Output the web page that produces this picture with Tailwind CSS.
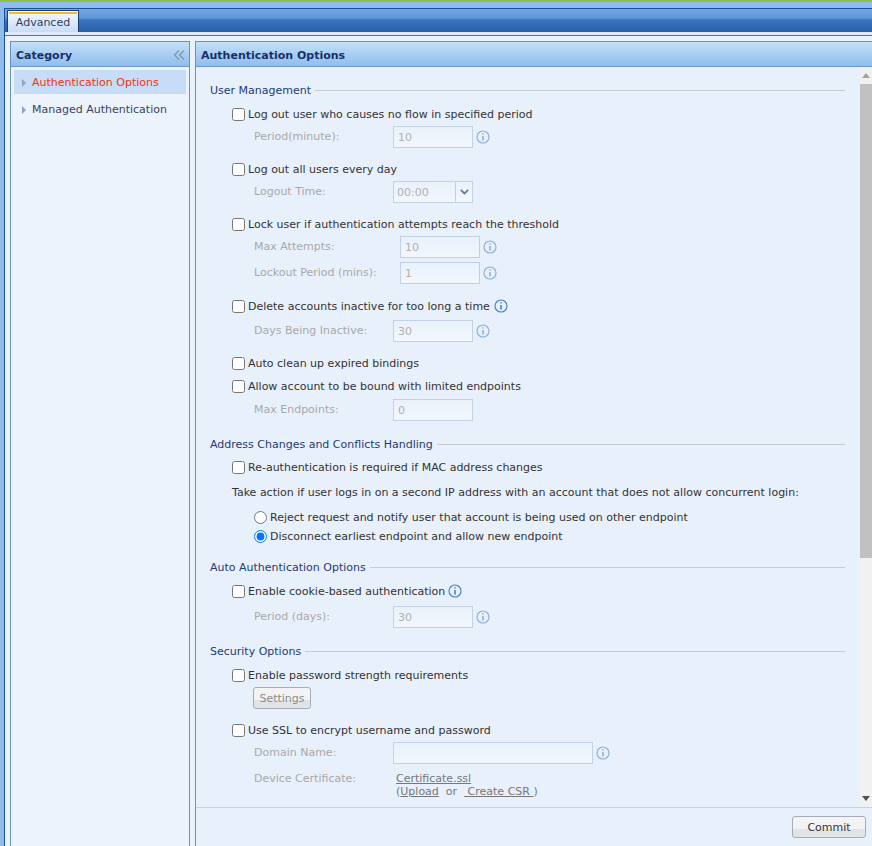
<!DOCTYPE html>
<html lang="en">
<head>
    <meta charset="UTF-8">
    <title>Advanced</title>
    <script src="https://cdn.jsdelivr.net/npm/@tailwindcss/browser@4"></script>
</head>
<body class="m-0 bg-[#8fbcec]">
<div class="w-[872px] h-[846px] overflow-hidden flex flex-col font-['DejaVu_Sans',sans-serif] text-[11px] text-[#333]">
    <div class="h-[2px] bg-[#8cc152]"></div>
    <div class="h-[6px]"></div>

    <div class="ml-[4px] flex-1 min-h-0 flex flex-col border-l border-[#1f4f93] bg-[#eaf2fc]">
        <!-- tab bar -->
        <div class="h-[24px] shrink-0 pt-px pl-[2px] border-t border-[#1f4f93] bg-[linear-gradient(#74a7e2,#5f95d6_40%,#3a72bc_48%,#2a60aa)]">
            <div class="w-[72px] h-[23px] border border-b-0 border-[#1b3f78] bg-gradient-to-b from-[#f6f9fd] to-[#c5dbf5] pt-px px-px">
                <div class="h-[20px] pt-px flex items-center justify-center border-t-2 border-[#fbb62a] text-[#2c3e66]">Advanced</div>
            </div>
        </div>
        <div class="h-[4px] shrink-0 bg-[#dfeafa] border-b border-[#4f75a5]"></div>

        <div class="flex-1 flex min-h-0 pt-[5px] pl-[5px] gap-[5px]">
            <!-- category -->
            <div class="w-[180px] flex flex-col border-x border-t border-[#6f90bb] bg-[#ecf3fd]">
                <div class="h-[25px] shrink-0 flex items-center justify-between pt-[4px] pl-[5px] pr-[4px] bg-gradient-to-b from-[#c5e0f9] to-[#8fbdec] border-b border-[#6f9ac9]">
                    <span class="font-bold text-[#15316b]">Category</span>
                    <svg class="w-[12px] h-[10px] mb-[2px]" viewBox="0 0 12 10" fill="none" stroke="#7d93ad" stroke-width="1.2"><path d="M6 .5 1.5 5 6 9.5M11 .5 6.5 5 11 9.5"/></svg>
                </div>
                <div class="pt-[3px] px-[3px]">
                    <div class="h-[24px] pt-[2px] flex items-center bg-[#c6dcf7] pl-[8px] text-[#f5340f]">
                        <svg class="w-[4px] h-[8px] mr-[6px]" viewBox="0 0 4 8"><path d="M0 0 4 4 0 8z" fill="#8ea3bd"/></svg>Authentication Options
                    </div>
                    <div class="h-[24px] mt-[3px] pt-[2px] flex items-center pl-[8px] text-[#39435c]">
                        <svg class="w-[4px] h-[8px] mr-[6px]" viewBox="0 0 4 8"><path d="M0 0 4 4 0 8z" fill="#8ea3bd"/></svg>Managed Authentication
                    </div>
                </div>
            </div>

            <!-- options -->
            <div class="flex-1 min-w-0 flex flex-col border-l border-t border-[#6f90bb] bg-[#e8f0fc]">
                <div class="h-[25px] shrink-0 pt-[4px] flex items-center pl-[5px] bg-gradient-to-b from-[#c5e0f9] to-[#8fbdec] border-b border-[#6f9ac9] font-bold text-[#15316b]">Authentication Options</div>

                <div class="flex-1 min-h-0 flex border-b border-[#c9d3e0]">
                    <div class="flex-1 min-w-0 pt-[15px] pl-[14px] pr-[15px]">
                        <div class="h-[16px] pt-[2px] flex items-center gap-[4px] text-[#1f3b73]">User Management<span class="flex-1 h-px mb-[2px] bg-[#c8ccd2]"></span></div>

                        <label class="h-[20px] mt-[6px] pt-[2px] ml-[22px] flex items-center gap-[3px]"><input type="checkbox" class="w-[13px] h-[13px] m-0 mb-[2px]">Log out user who causes no flow in specified period</label>
                        <div class="h-[22px] mt-[2px] ml-[44px] flex items-center text-[#a8a8a8]">
                            <span class="w-[139px]">Period(minute):</span>
                            <span class="w-[80px] h-[22px] pt-[2px] flex items-center pl-[4px] border border-[#c3d1e4] bg-gradient-to-b from-[#e9f1fb] to-[#f3f7fd] text-[#b0b0b0]">10</span>
                            <svg class="w-[14px] h-[14px] ml-[3px]" viewBox="0 0 14 14" fill="none" stroke="#8fb0d6" stroke-width="1.2"><circle cx="7" cy="7" r="6"/><path d="M7 6v4.5M7 3.2v1.3" stroke-width="1.6"/></svg>
                        </div>

                        <label class="h-[20px] mt-[11px] pt-[2px] ml-[22px] flex items-center gap-[3px]"><input type="checkbox" class="w-[13px] h-[13px] m-0 mb-[2px]">Log out all users every day</label>
                        <div class="h-[22px] mt-[2px] ml-[44px] flex items-center text-[#a8a8a8]">
                            <span class="w-[139px]">Logout Time:</span>
                            <span class="w-[80px] h-[22px] flex items-center pl-[3px] border border-[#c3d1e4] bg-gradient-to-b from-[#e9f1fb] to-[#f3f7fd] text-[#b0b0b0]"><span class="pt-[2px]">00:00</span>
                                <span class="ml-auto w-[17px] h-full flex items-center justify-center border-l border-[#c3d1e4]"><svg class="w-[9px] h-[6px]" viewBox="0 0 9 6" fill="none" stroke="#5f7fa8" stroke-width="1.8"><path d="M.8 .8 4.5 4.5 8.2 .8"/></svg></span>
                            </span>
                        </div>

                        <label class="h-[20px] mt-[11px] pt-[2px] ml-[22px] flex items-center gap-[3px]"><input type="checkbox" class="w-[13px] h-[13px] m-0 mb-[2px]">Lock user if authentication attempts reach the threshold</label>
                        <div class="h-[22px] mt-[2px] ml-[44px] flex items-center text-[#a8a8a8]">
                            <span class="w-[146px]">Max Attempts:</span>
                            <span class="w-[80px] h-[22px] pt-[2px] flex items-center pl-[4px] border border-[#c3d1e4] bg-gradient-to-b from-[#e9f1fb] to-[#f3f7fd] text-[#b0b0b0]">10</span>
                            <svg class="w-[14px] h-[14px] ml-[3px]" viewBox="0 0 14 14" fill="none" stroke="#8fb0d6" stroke-width="1.2"><circle cx="7" cy="7" r="6"/><path d="M7 6v4.5M7 3.2v1.3" stroke-width="1.6"/></svg>
                        </div>
                        <div class="h-[22px] mt-[4px] ml-[44px] flex items-center text-[#a8a8a8]">
                            <span class="w-[146px]">Lockout Period (mins):</span>
                            <span class="w-[80px] h-[22px] pt-[2px] flex items-center pl-[4px] border border-[#c3d1e4] bg-gradient-to-b from-[#e9f1fb] to-[#f3f7fd] text-[#b0b0b0]">1</span>
                            <svg class="w-[14px] h-[14px] ml-[3px]" viewBox="0 0 14 14" fill="none" stroke="#8fb0d6" stroke-width="1.2"><circle cx="7" cy="7" r="6"/><path d="M7 6v4.5M7 3.2v1.3" stroke-width="1.6"/></svg>
                        </div>

                        <label class="h-[20px] mt-[12px] pt-[2px] ml-[22px] flex items-center gap-[3px]"><input type="checkbox" class="w-[13px] h-[13px] m-0 mb-[2px]">Delete accounts inactive for too long a time
                            <svg class="w-[14px] h-[14px] ml-[1px] mb-[2px]" viewBox="0 0 14 14" fill="none" stroke="#4a82c3" stroke-width="1.2"><circle cx="7" cy="7" r="6"/><path d="M7 6v4.5M7 3.2v1.3" stroke-width="1.6"/></svg>
                        </label>
                        <div class="h-[22px] mt-[4px] ml-[44px] flex items-center text-[#a8a8a8]">
                            <span class="w-[139px]">Days Being Inactive:</span>
                            <span class="w-[80px] h-[22px] pt-[2px] flex items-center pl-[4px] border border-[#c3d1e4] bg-gradient-to-b from-[#e9f1fb] to-[#f3f7fd] text-[#b0b0b0]">30</span>
                            <svg class="w-[14px] h-[14px] ml-[3px]" viewBox="0 0 14 14" fill="none" stroke="#8fb0d6" stroke-width="1.2"><circle cx="7" cy="7" r="6"/><path d="M7 6v4.5M7 3.2v1.3" stroke-width="1.6"/></svg>
                        </div>

                        <label class="h-[20px] mt-[11px] pt-[2px] ml-[22px] flex items-center gap-[3px]"><input type="checkbox" class="w-[13px] h-[13px] m-0 mb-[2px]">Auto clean up expired bindings</label>
                        <label class="h-[20px] mt-[3px] pt-[2px] ml-[22px] flex items-center gap-[3px]"><input type="checkbox" class="w-[13px] h-[13px] m-0 mb-[2px]">Allow account to be bound with limited endpoints</label>
                        <div class="h-[22px] mt-[3px] ml-[44px] flex items-center text-[#a8a8a8]">
                            <span class="w-[139px]">Max Endpoints:</span>
                            <span class="w-[80px] h-[22px] pt-[2px] flex items-center pl-[4px] border border-[#c3d1e4] bg-gradient-to-b from-[#e9f1fb] to-[#f3f7fd] text-[#b0b0b0]">0</span>
                        </div>

                        <div class="h-[16px] mt-[15px] pt-[2px] flex items-center gap-[4px] text-[#1f3b73]">Address Changes and Conflicts Handling<span class="flex-1 h-px mb-[2px] bg-[#c8ccd2]"></span></div>
                        <label class="h-[20px] mt-[5px] pt-[2px] ml-[22px] flex items-center gap-[3px]"><input type="checkbox" class="w-[13px] h-[13px] m-0 mb-[2px]">Re-authentication is required if MAC address changes</label>
                        <div class="h-[20px] mt-[5px] pt-[2px] ml-[22px] flex items-center">Take action if user logs in on a second IP address with an account that does not allow concurrent login:</div>
                        <label class="h-[18px] mt-[6px] pt-[2px] ml-[44px] flex items-center gap-[3px]"><input type="radio" name="second_ip" class="w-[13px] h-[13px] m-0 mb-[2px]">Reject request and notify user that account is being used on other endpoint</label>
                        <label class="h-[18px] mt-[1px] pt-[2px] ml-[44px] flex items-center gap-[3px]"><input type="radio" name="second_ip" checked class="w-[13px] h-[13px] m-0 mb-[2px]">Disconnect earliest endpoint and allow new endpoint</label>

                        <div class="h-[16px] mt-[14px] pt-[2px] flex items-center gap-[4px] text-[#1f3b73]">Auto Authentication Options<span class="flex-1 h-px mb-[2px] bg-[#c8ccd2]"></span></div>
                        <label class="h-[20px] mt-[6px] pt-[2px] ml-[22px] flex items-center gap-[3px]"><input type="checkbox" class="w-[13px] h-[13px] m-0 mb-[2px]">Enable cookie-based authentication
                            <svg class="w-[14px] h-[14px] mb-[2px]" viewBox="0 0 14 14" fill="none" stroke="#4a82c3" stroke-width="1.2"><circle cx="7" cy="7" r="6"/><path d="M7 6v4.5M7 3.2v1.3" stroke-width="1.6"/></svg>
                        </label>
                        <div class="h-[22px] mt-[5px] ml-[44px] flex items-center text-[#a8a8a8]">
                            <span class="w-[139px]">Period (days):</span>
                            <span class="w-[80px] h-[22px] pt-[2px] flex items-center pl-[4px] border border-[#c3d1e4] bg-gradient-to-b from-[#e9f1fb] to-[#f3f7fd] text-[#b0b0b0]">30</span>
                            <svg class="w-[14px] h-[14px] ml-[3px]" viewBox="0 0 14 14" fill="none" stroke="#8fb0d6" stroke-width="1.2"><circle cx="7" cy="7" r="6"/><path d="M7 6v4.5M7 3.2v1.3" stroke-width="1.6"/></svg>
                        </div>

                        <div class="h-[16px] mt-[15px] pt-[2px] flex items-center gap-[4px] text-[#1f3b73]">Security Options<span class="flex-1 h-px mb-[2px] bg-[#c8ccd2]"></span></div>
                        <label class="h-[20px] mt-[6px] pt-[2px] ml-[22px] flex items-center gap-[3px]"><input type="checkbox" class="w-[13px] h-[13px] m-0 mb-[2px]">Enable password strength requirements</label>
                        <div class="h-[22px] mt-[2px] ml-[43px] w-[58px] pt-[2px] flex items-center justify-center rounded-[3px] border border-[#a6adb8] bg-[linear-gradient(#f3f3f6_60%,#e1e3e7_60%)] text-[#8a8a8a]">Settings</div>
                        <label class="h-[20px] mt-[11px] pt-[2px] ml-[22px] flex items-center gap-[3px]"><input type="checkbox" class="w-[13px] h-[13px] m-0 mb-[2px]">Use SSL to encrypt username and password</label>
                        <div class="h-[22px] mt-[2px] ml-[44px] flex items-center text-[#a8a8a8]">
                            <span class="w-[139px]">Domain Name:</span>
                            <span class="w-[200px] h-[22px] border border-[#c3d1e4] bg-gradient-to-b from-[#e9f1fb] to-[#f3f7fd]"></span>
                            <svg class="w-[14px] h-[14px] ml-[3px]" viewBox="0 0 14 14" fill="none" stroke="#8fb0d6" stroke-width="1.2"><circle cx="7" cy="7" r="6"/><path d="M7 6v4.5M7 3.2v1.3" stroke-width="1.6"/></svg>
                        </div>
                        <div class="mt-[8px] ml-[44px] flex leading-[13px]">
                            <span class="w-[142px] text-[#a8a8a8]">Device Certificate:</span>
                            <div class="text-[#777]">
                                <div class="underline">Certificate.ssl</div>
                                <div>(<span class="underline">Upload</span>&nbsp; or &nbsp;<span class="underline">&nbsp;Create CSR&nbsp;</span>)</div>
                            </div>
                        </div>
                    </div>

                    <!-- scrollbar -->
                    <div class="w-[12px] shrink-0 flex flex-col bg-[#f1f1f1]">
                        <div class="h-[17px] flex items-center justify-center"><svg class="w-[8px] h-[5px]" viewBox="0 0 8 5"><path d="M4 0 8 5H0z" fill="#a3a3a3"/></svg></div>
                        <div class="h-[474px] bg-[#c1c1c1]"></div>
                        <div class="mt-auto h-[17px] flex items-center justify-center"><svg class="w-[8px] h-[5px]" viewBox="0 0 8 5"><path d="M0 0h8L4 5z" fill="#505050"/></svg></div>
                    </div>
                </div>

                <div class="h-[38px] shrink-0 flex items-center justify-end pr-[6px]">
                    <div class="w-[74px] h-[22px] pt-[2px] flex items-center justify-center rounded-[3px] border border-[#a6adb8] bg-[linear-gradient(#f3f3f6_60%,#e1e3e7_60%)] text-[#333]">Commit</div>
                </div>
            </div>
        </div>
    </div>
</div>
</body>
</html>
